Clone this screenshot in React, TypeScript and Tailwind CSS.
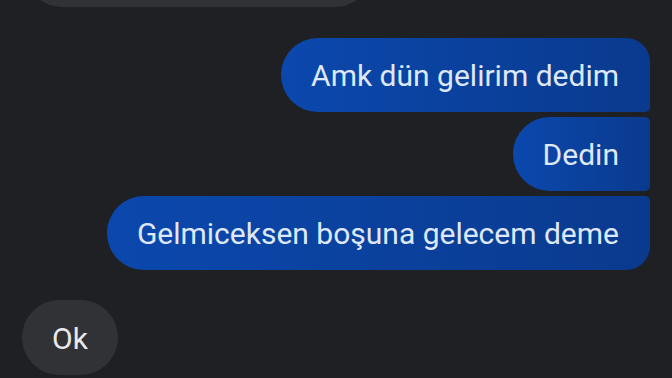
import React from 'react';

const font = { fontFamily: 'Roboto, "Noto Sans", sans-serif' };

const outgoing = [
    { id: 1, text: 'Amk dün gelirim dedim', corners: 'rounded-l-[37px] rounded-tr-[24px] rounded-br-[5px]' },
    { id: 2, text: 'Dedin', corners: 'rounded-l-[37px] rounded-r-[5px]' },
    { id: 3, text: 'Gelmiceksen boşuna gelecem deme', corners: 'rounded-l-[37px] rounded-tr-[5px] rounded-br-[24px]' },
];

const App = () => {
    return (
        <div className="w-[672px] h-[378px] overflow-hidden bg-[#1f2024] px-[22px]" style={font}>
            <div className="-mt-[67px] ml-[3px] h-[74px] w-[347px] rounded-[37px] bg-[#313236]"></div>

            <div className="mt-[31px] flex flex-col items-end gap-[5px]">
                {outgoing.map(msg => (
                    <div
                        key={msg.id}
                        className={`h-[74px] flex items-center pl-[30px] pr-[31px] pt-[2px] bg-gradient-to-r from-[#0b48ad] to-[#0a3a8e] text-[#dfe8f8] text-[30px] leading-none ${msg.corners}`}
                    >
                        {msg.text}
                    </div>
                ))}
            </div>

            <div className="mt-[30px] flex">
                <div className="h-[75px] w-[96px] pt-[2px] flex items-center justify-center rounded-full bg-[#313236] text-[#e9e9eb] text-[30px] leading-none">
                    Ok
                </div>
            </div>
        </div>
    );
};

export default App;
